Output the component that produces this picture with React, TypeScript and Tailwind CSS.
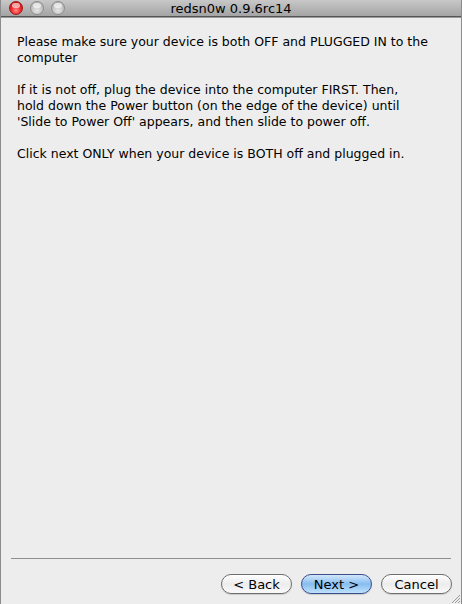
import React from "react";

const font = { fontFamily: '"DejaVu Sans", "Noto Sans", sans-serif' };

function Light({ color }: { color: "red" | "gray" }) {
  const red = color === "red";
  return (
    <div
      className={
        "w-[14px] h-[14px] rounded-full border " +
        (red ? "border-[#9a1a1a]" : "border-[#8e8e8e]")
      }
      style={{
        background: red
          ? "radial-gradient(circle at 50% 70%, #ff8a8a 0%, #f12828 45%, #b30d0d 100%)"
          : "radial-gradient(circle at 50% 70%, #e6e6e6 0%, #c4c4c4 50%, #a3a3a3 100%)",
      }}
    >
      <div className="mx-auto mt-[1px] w-[8px] h-[5px] rounded-full bg-white/60" />
    </div>
  );
}

function Btn({ label, primary }: { label: string; primary?: boolean }) {
  return (
    <div
      className={
        "w-[71px] h-[20px] rounded-full border flex items-center justify-center text-[13px] text-black leading-none " +
        (primary
          ? "border-[#3b4d8c] bg-gradient-to-b from-[#d3e6fb] via-[#87bdf0] to-[#bfe1fb]"
          : "border-[#6e6e6e] bg-gradient-to-b from-[#ffffff] via-[#ececec] to-[#fafafa]")
      }
      style={{ ...font, boxShadow: "0 1px 1px rgba(0,0,0,0.15)" }}
    >
      {label}
    </div>
  );
}

export default function App() {
  return (
    <div className="w-[462px] h-[604px] flex flex-col bg-[#ededed] border-l border-r border-[#8c8c8c] overflow-hidden" style={font}>
      <div className="h-[16px] shrink-0 relative flex items-center bg-gradient-to-b from-[#c8c8c8] to-[#a4a4a4]">
        <div className="flex gap-[7px] pl-[8px]">
          <Light color="red" />
          <Light color="gray" />
          <Light color="gray" />
        </div>
        <div className="absolute inset-0 flex items-center justify-center text-[13px] text-black leading-none">
          redsn0w 0.9.6rc14
        </div>
      </div>
      <div className="h-[1px] bg-[#555] shrink-0" />
      <div className="h-[1px] bg-[#9a9a9a] shrink-0" />
      <div className="flex-1 flex flex-col pt-[16px] pl-[16px] pr-[12px] text-[12.5px] leading-[16px] text-black">
        <p>
          Please make sure your device is both OFF and PLUGGED IN to the
          <br />
          computer
        </p>
        <p className="mt-[16px]">
          If it is not off, plug the device into the computer FIRST. Then,
          <br />
          hold down the Power button (on the edge of the device) until
          <br />
          'Slide to Power Off' appears, and then slide to power off.
        </p>
        <p className="mt-[16px]">Click next ONLY when your device is BOTH off and plugged in.</p>
      </div>
      <div className="mx-[10px] h-[1px] bg-[#8f8f8f] shrink-0" />
      <div className="h-[45px] shrink-0 relative flex items-start justify-end pt-[15px] pr-[9px] gap-[9px]">
        <Btn label="< Back" />
        <Btn label="Next >" primary />
        <Btn label="Cancel" />
        <svg className="absolute right-0 bottom-0" width="11" height="11" viewBox="0 0 11 11">
          <path d="M10 2 L2 10 M10 5 L5 10 M10 8 L8 10" stroke="#9a9a9a" strokeWidth="1" />
        </svg>
      </div>
    </div>
  );
}
